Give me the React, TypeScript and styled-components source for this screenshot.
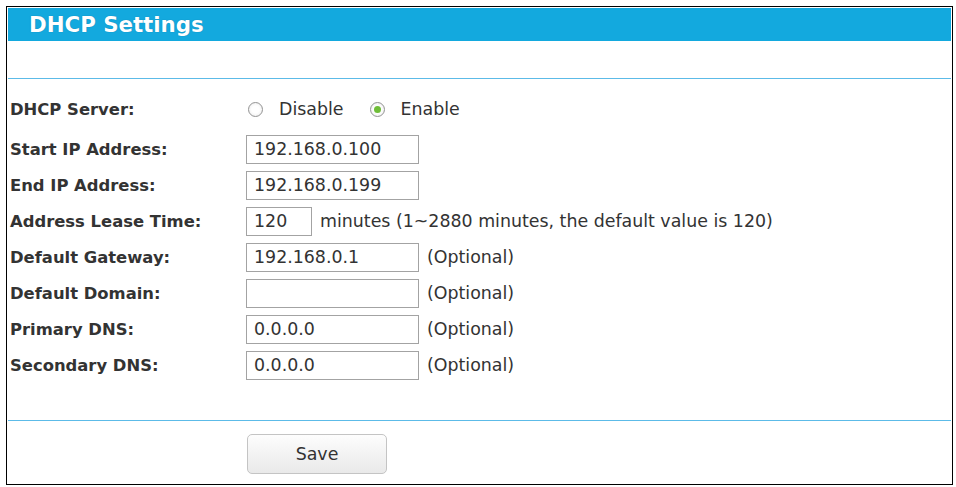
import React, { ReactElement } from 'react';
import styled, { createGlobalStyle } from 'styled-components';

const GlobalStyle = createGlobalStyle`
  html, body {
    margin: 0;
    padding: 0;
    background: #fff;
  }
  body {
    font-family: "DejaVu Sans", Verdana, sans-serif;
    color: #333;
  }
`;

const Frame = styled.div`
  box-sizing: border-box;
  margin: 6px 0 0 6px;
  width: 947px;
  height: 479px;
  border: 1px solid #000;
  padding: 1px;
  display: flex;
  flex-direction: column;
`;

const Header = styled.div`
  height: 33px;
  background: #13a9de;
  color: #fff;
  font-weight: bold;
  font-size: 21.3px;
  line-height: 33px;
  padding-left: 21px;
  text-shadow: 0 0 1px rgba(0, 60, 100, 0.45);
`;

const Rule = styled.div<{ $top: number }>`
  height: 1px;
  background: #5cbbe8;
  margin-top: ${(p) => p.$top}px;
`;

const Form = styled.div`
  display: flex;
  flex-direction: column;
  padding: 12px 0 0 2px;
`;

const Row = styled.div<{ $gap?: number }>`
  display: grid;
  grid-template-columns: 236px 1fr;
  align-items: center;
  height: 36px;
  margin-bottom: ${(p) => p.$gap ?? 0}px;
`;

const Label = styled.div`
  font-weight: bold;
  font-size: 16.4px;
  color: #333;
`;

const Field = styled.div`
  display: flex;
  align-items: center;
  font-size: 17.4px;
  color: #333;
`;

const Input = styled.div<{ $w: number }>`
  box-sizing: border-box;
  width: ${(p) => p.$w}px;
  height: 29px;
  border: 1px solid #a3a3a3;
  background: #fff;
  padding-left: 7px;
  line-height: 27px;
  font-size: 17.4px;
  color: #333;
`;

const Note = styled.span`
  margin-left: 8px;
`;

const RadioGroup = styled.label`
  display: flex;
  align-items: center;
  margin-left: 2px;
  margin-right: 24px;
`;

const Circle = styled.span<{ $on?: boolean }>`
  box-sizing: border-box;
  width: 15px;
  height: 15px;
  border-radius: 50%;
  border: 1.5px solid #939393;
  background: radial-gradient(circle, #ffffff 40%, #e8e8e8 100%);
  margin-right: 16px;
  display: flex;
  align-items: center;
  justify-content: center;
  &::after {
    content: '';
    width: 7px;
    height: 7px;
    border-radius: 50%;
    background: ${(p) => (p.$on ? '#6fbd38' : 'transparent')};
  }
`;

const Footer = styled.div`
  padding: 13px 0 0 239px;
`;

const SaveButton = styled.button`
  box-sizing: border-box;
  width: 140px;
  height: 40px;
  border: 1px solid #c4c4c4;
  border-radius: 5px;
  background: linear-gradient(#fdfdfd, #e9e9e9);
  font-family: "DejaVu Sans", Verdana, sans-serif;
  font-size: 17.4px;
  color: #333;
`;

const fields = [
  { label: 'Start IP Address:', value: '192.168.0.100', width: 173 },
  { label: 'End IP Address:', value: '192.168.0.199', width: 173 },
  { label: 'Address Lease Time:', value: '120', width: 66, note: 'minutes (1~2880 minutes, the default value is 120)' },
  { label: 'Default Gateway:', value: '192.168.0.1', width: 173, note: '(Optional)' },
  { label: 'Default Domain:', value: '', width: 173, note: '(Optional)' },
  { label: 'Primary DNS:', value: '0.0.0.0', width: 173, note: '(Optional)' },
  { label: 'Secondary DNS:', value: '0.0.0.0', width: 173, note: '(Optional)' },
];

export default function App(): ReactElement {
  return (
    <>
      <GlobalStyle />
      <Frame>
        <Header>DHCP Settings</Header>
        <Rule $top={37} />
        <Form>
          <Row $gap={4}>
            <Label>DHCP Server:</Label>
            <Field>
              <RadioGroup>
                <Circle />
                Disable
              </RadioGroup>
              <RadioGroup>
                <Circle $on />
                Enable
              </RadioGroup>
            </Field>
          </Row>
          {fields.map((f) => (
            <Row key={f.label}>
              <Label>{f.label}</Label>
              <Field>
                <Input $w={f.width}>{f.value}</Input>
                {f.note && <Note>{f.note}</Note>}
              </Field>
            </Row>
          ))}
        </Form>
        <Rule $top={37} />
        <Footer>
          <SaveButton>Save</SaveButton>
        </Footer>
      </Frame>
    </>
  );
}
